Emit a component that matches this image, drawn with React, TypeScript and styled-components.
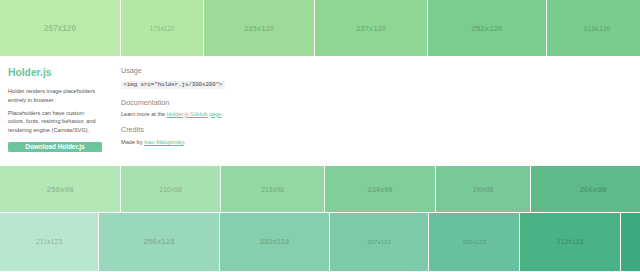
import React from "react";
import styled, { createGlobalStyle } from "styled-components";

const GlobalStyle = createGlobalStyle`
  html, body {
    margin: 0;
    padding: 0;
    background: #fff;
    overflow: hidden;
  }
  body {
    font-family: "Liberation Sans", Arial, sans-serif;
    color: #555;
  }
`;

type TileData = {
  w: number;
  label: string;
  bg: string;
  size: number;
  bold?: boolean;
};

const rows: { h: number; tiles: TileData[] }[] = [
  {
    h: 56,
    tiles: [
      { w: 120, label: "257x120", bg: "#b9eba9", size: 8.2, bold: true },
      { w: 82, label: "175x120", bg: "#b2e8a4", size: 6.4 },
      { w: 110, label: "235x120", bg: "#9cdc96", size: 7.7, bold: true },
      { w: 112, label: "237x120", bg: "#8fd694", size: 7.7, bold: true },
      { w: 118, label: "252x120", bg: "#7acd8f", size: 8, bold: true },
      { w: 100, label: "213x120", bg: "#7acc8e", size: 6.9, bold: true },
    ],
  },
];

const bottomRows: { h: number; tiles: TileData[] }[] = [
  {
    h: 46,
    tiles: [
      { w: 120, label: "259x98", bg: "#b4e7b6", size: 8.1, bold: true },
      { w: 99, label: "210x98", bg: "#a8e1b0", size: 6.9 },
      { w: 103, label: "219x98", bg: "#93d7a3", size: 6.9 },
      { w: 110, label: "234x98", bg: "#80ce9a", size: 7.5, bold: true },
      { w: 94, label: "199x98", bg: "#78c99a", size: 6.3 },
      { w: 124, label: "266x98", bg: "#5cbb88", size: 8.1, bold: true },
    ],
  },
  {
    h: 57.5,
    tiles: [
      { w: 98, label: "211x123", bg: "#b8e6cf", size: 6.9 },
      { w: 120, label: "256x123", bg: "#9ad8bb", size: 8, bold: true },
      { w: 109, label: "232x123", bg: "#86cfad", size: 7.5, bold: true },
      { w: 98, label: "207x123", bg: "#7ccaa8", size: 6.2 },
      { w: 90, label: "192x123", bg: "#68c19e", size: 6.2 },
      { w: 100, label: "212x123", bg: "#4ab386", size: 6.9, bold: true },
      { w: 60, label: "", bg: "#3ca97f", size: 7 },
    ],
  },
  {
    h: 20,
    tiles: [
      { w: 200, label: "", bg: "#dde3df", size: 7 },
      { w: 200, label: "", bg: "#dde3df", size: 7 },
      { w: 260, label: "", bg: "#dde3df", size: 7 },
    ],
  },
];

const Page = styled.div`
  width: 640px;
  height: 272px;
  display: flex;
  flex-direction: column;
  gap: 1px;
  overflow: hidden;
`;

const Row = styled.div<{ $h: number }>`
  flex: 0 0 auto;
  height: ${({ $h }) => $h}px;
  display: flex;
  gap: 1px;
`;

const Tile = styled.div<{ $w: number; $bg: string; $size: number; $bold?: boolean }>`
  flex: 0 0 auto;
  width: ${({ $w }) => $w}px;
  background: ${({ $bg }) => $bg};
  display: flex;
  align-items: center;
  justify-content: center;
  color: ${({ $bold }) => ($bold ? "rgba(0, 0, 0, 0.2)" : "rgba(0, 0, 0, 0.27)")};
  font-size: ${({ $size }) => $size}px;
  font-weight: ${({ $bold }) => ($bold ? 700 : 400)};
`;

const Info = styled.section`
  flex: 0 0 auto;
  height: 108px;
  box-sizing: border-box;
  padding: 9px 8px 0;
  display: flex;
  background: #fff;
`;

const Sidebar = styled.div`
  width: 94px;
  margin-right: 19px;
  flex: 0 0 auto;
`;

const Title = styled.h1`
  margin: 1px 0 0;
  font-size: 10.3px;
  line-height: 12px;
  font-weight: 700;
  color: #66c69c;
`;

const Text = styled.p<{ $gap?: number }>`
  margin: ${({ $gap }) => $gap ?? 0}px 0 0;
  font-size: 5.6px;
  line-height: 8.5px;
  color: #555;
`;

const DownloadButton = styled.a`
  display: block;
  margin-top: 7.7px;
  height: 10.5px;
  line-height: 10.5px;
  border-radius: 1.5px;
  background: #6cc59e;
  color: #fff;
  font-size: 6.4px;
  font-weight: 700;
  text-align: center;
  text-decoration: none;
`;

const Main = styled.div`
  flex: 1;
`;

const Heading = styled.h3<{ $gap?: number }>`
  margin: ${({ $gap }) => $gap ?? 0}px 0 0;
  font-size: 7.2px;
  line-height: 9px;
  font-weight: 400;
  color: #888;
`;

const Code = styled.code`
  display: block;
  width: fit-content;
  margin: 5.5px 0 0;
  padding: 0 2.5px;
  height: 8.6px;
  line-height: 8.6px;
  border-radius: 1.5px;
  background: #f1f1f1;
  font-family: "Liberation Mono", "DejaVu Sans Mono", monospace;
  font-size: 5.7px;
  color: #444;
`;

const Link = styled.a`
  color: #5fbf95;
  text-decoration: underline;
`;

const Tiles = ({ h, tiles }: { h: number; tiles: TileData[] }) => (
  <Row $h={h}>
    {tiles.map((t, i) => (
      <Tile key={i} $w={t.w} $bg={t.bg} $size={t.size} $bold={t.bold}>
        {t.label}
      </Tile>
    ))}
  </Row>
);

const App = () => (
  <>
    <GlobalStyle />
    <Page>
      {rows.map((r, i) => (
        <Tiles key={i} h={r.h} tiles={r.tiles} />
      ))}
      <Info>
        <Sidebar>
          <Title>Holder.js</Title>
          <Text $gap={8}>
            Holder renders image placeholders
            <br />
            entirely in browser.
          </Text>
          <Text $gap={4.5}>
            Placeholders can have custom
            <br />
            colors, fonts, resizing behavior, and
            <br />
            rendering engine (Canvas/SVG).
          </Text>
          <DownloadButton href="#">Download Holder.js</DownloadButton>
        </Sidebar>
        <Main>
          <Heading>Usage</Heading>
          <Code>&lt;img src="holder.js/300x200"&gt;</Code>
          <Heading $gap={8.9}>Documentation</Heading>
          <Text $gap={2.6}>
            Learn more at the <Link href="#">Holder.js GitHub page</Link>.
          </Text>
          <Heading $gap={7.3}>Credits</Heading>
          <Text $gap={3.6}>
            Made by <Link href="#">Ivan Malopinsky</Link>.
          </Text>
        </Main>
      </Info>
      {bottomRows.map((r, i) => (
        <Tiles key={i} h={r.h} tiles={r.tiles} />
      ))}
    </Page>
  </>
);

export default App;
